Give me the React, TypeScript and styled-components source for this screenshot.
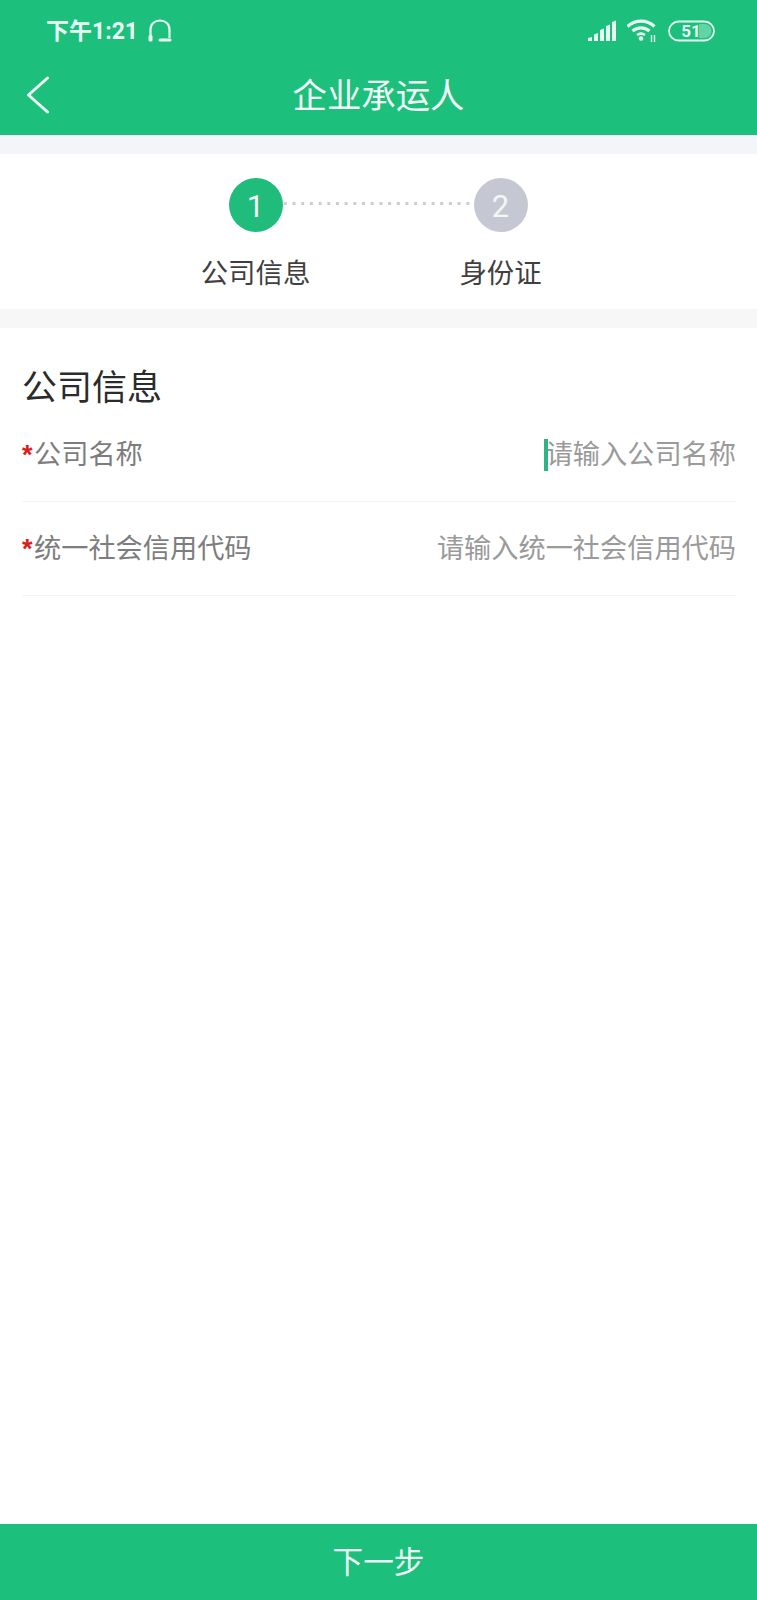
import React from "react";
import styled, {createGlobalStyle} from "styled-components";

const GREEN = "#1dbf7c";
const CJK = `Roboto, "Noto Sans CJK SC", sans-serif`;

const GlobalStyle = createGlobalStyle`
  html, body {
    margin: 0;
    padding: 0;
    background: #fff;
  }
  body {
    font-family: ${CJK};
  }
`;

const Page = styled.div`
  width: 757px;
  height: 1600px;
  display: flex;
  flex-direction: column;
  background: #fff;
  overflow: hidden;
`;

const Header = styled.header`
  background: ${GREEN};
  height: 135px;
  flex: none;
  color: #fff;
`;
const StatusBar = styled.div`
  height: 62px;
  padding: 0 42px 0 46px;
  display: flex;
  align-items: center;
  justify-content: space-between;
`;
const StatusGroup = styled.div`
  display: flex;
  align-items: center;
  gap: ${(p: {$gap: number}) => p.$gap}px;
`;
const Clock = styled.span`
  font-size: 23px;
  font-weight: 700;
  line-height: 1;
  color: #e9fbf2;
`;
const NavBar = styled.div`
  height: 73px;
  display: grid;
  grid-template-columns: 90px 1fr 90px;
  align-items: center;
`;
const BackButton = styled.div`
  padding: 0 0 8px 26px;
  display: flex;
  align-items: center;
`;
const NavTitle = styled.h1`
  margin: 0;
  padding-bottom: 5px;
  font-size: 34.4px;
  font-weight: 400;
  line-height: 1;
  text-align: center;
  color: #f1fcf7;
`;

const Gap = styled.div`
  flex: none;
  height: 19px;
  background: ${(p: {$color: string}) => p.$color};
`;

const Stepper = styled.section`
  flex: none;
  height: 155px;
  padding-top: 24px;
  box-sizing: border-box;
  display: flex;
  justify-content: center;
  padding-right: 1px;
`;
const Step = styled.div`
  width: 54px;
  display: flex;
  flex-direction: column;
  align-items: center;
`;
const StepCircle = styled.div<{$active?: boolean}>`
  width: 54px;
  height: 54px;
  border-radius: 50%;
  flex: none;
  background: ${(p) => (p.$active ? "#1fbc7b" : "#c5c8d2")};
  color: #f4f6f6;
  font-size: 31px;
  line-height: 58px;
  text-align: center;
`;
const StepLabel = styled.div`
  margin-top: 26px;
  font-size: 27.4px;
  line-height: 32px;
  white-space: nowrap;
  color: #3f3f3f;
`;
const StepDots = styled.div`
  width: 191px;
  height: 3px;
  margin-top: 24px;
  background-image: radial-gradient(circle, #c9ccd2 1.4px, transparent 1.5px);
  background-size: 8.7px 3px;
  background-repeat: repeat-x;
  background-position: -2px center;
`;

const Form = styled.main`
  flex: 1;
  padding: 0 21px 0 22px;
  display: flex;
  flex-direction: column;
`;
const SectionTitle = styled.h2`
  margin: 0;
  padding: 41px 0 0;
  font-size: 35px;
  font-weight: 400;
  line-height: 40px;
  color: #2b2b2b;
`;
const Row = styled.div<{$height: number; $lift: number}>`
  height: ${(p) => p.$height}px;
  padding-bottom: ${(p) => p.$lift}px;
  display: flex;
  align-items: center;
  justify-content: space-between;
  border-bottom: 1px solid #f4f4f4;
  box-sizing: border-box;
`;
const FieldLabel = styled.label`
  font-size: 27.2px;
  line-height: 32px;
  color: #7d7d7d;
  display: flex;
  align-items: center;
`;
const Required = styled.span`
  width: 12px;
  font-family: "Liberation Sans", sans-serif;
  font-weight: 700;
  font-size: 27px;
  line-height: 32px;
  color: #d81e1e;
`;
const Placeholder = styled.div`
  position: relative;
  font-size: 27.2px;
  line-height: 32px;
  color: #9a9a9a;
`;
const Caret = styled.span`
  position: absolute;
  left: -2px;
  top: 0;
  width: 4px;
  height: 32px;
  background: #2db582;
`;

const NextButton = styled.button`
  flex: none;
  height: 76px;
  width: 100%;
  padding: 3px 0 0;
  border: none;
  background: ${GREEN};
  color: #eefcf5;
  font-family: ${CJK};
  font-size: 30.6px;
  line-height: 1;
`;

const HeadsetIcon = () => (
    <svg width="26" height="24" viewBox="0 0 26 24" fill="none">
        <path d="M3.5 17V10.5C3.5 5 7.5 1.5 13 1.5S22.5 5 22.5 10.5V19" stroke="#eafbf3" strokeWidth="2.2" />
        <rect x="1.5" y="16" width="4" height="6.5" rx="1.5" fill="#eafbf3" />
        <path d="M13 21H23" stroke="#eafbf3" strokeWidth="3" strokeLinecap="round" />
    </svg>
);

const SignalIcon = () => (
    <svg width="28" height="22" viewBox="0 0 28 22" fill="#e6faf1">
        <path d="M0 21V18L4 17V21Z" />
        <path d="M6 21V14.5L10 13V21Z" />
        <path d="M12 21V10L16 8.5V21Z" />
        <path d="M18 21V6L22 4.5V21Z" />
        <path d="M24 21V2L28 .5V21Z" />
    </svg>
);

const WifiIcon = () => (
    <svg width="30" height="24" viewBox="0 0 30 24" fill="none" stroke="#e6faf1" strokeWidth="3.2">
        <path d="M.5 7.5C8 .2 20 .2 27.5 7.5" />
        <path d="M5.5 12C10.5 7.8 17.5 7.8 22.5 12" />
        <path d="M10 16C12.3 14.4 15.7 14.4 18 16" strokeWidth="2.6" />
        <circle cx="14" cy="19.5" r="2.3" fill="#e6faf1" stroke="none" />
        <path d="M24.5 16V23M27.5 16V23" strokeWidth="1.4" />
    </svg>
);

const BatteryIcon = () => (
    <svg width="47" height="22" viewBox="0 0 47 22" fill="none">
        <rect x="1" y="1.5" width="45" height="19" rx="9.5" stroke="#e6faf1" strokeWidth="1.8" />
        <path d="M31 4H36.5a7 7 0 0 1 0 14H31z" fill="#e6faf1" opacity="0.35" />
        <text x="23" y="17" textAnchor="middle" fontSize="17" fontWeight="700" fontFamily="Roboto, sans-serif" fill="#e6faf1">51</text>
    </svg>
);

const BackIcon = () => (
    <svg width="24" height="38" viewBox="0 0 24 38" fill="none">
        <path d="M21.5 2L2.5 19L21.5 36" stroke="#f1fcf7" strokeWidth="3" strokeLinecap="round" strokeLinejoin="round" />
    </svg>
);

export default function App() {
    return (
        <Page>
            <GlobalStyle />
            <Header>
                <StatusBar>
                    <StatusGroup $gap={9}>
                        <Clock>下午1:21</Clock>
                        <HeadsetIcon />
                    </StatusGroup>
                    <StatusGroup $gap={11}>
                        <SignalIcon />
                        <WifiIcon />
                        <BatteryIcon />
                    </StatusGroup>
                </StatusBar>
                <NavBar>
                    <BackButton><BackIcon /></BackButton>
                    <NavTitle>企业承运人</NavTitle>
                </NavBar>
            </Header>
            <Gap $color="#f2f6fa" />
            <Stepper>
                <Step>
                    <StepCircle $active>1</StepCircle>
                    <StepLabel>公司信息</StepLabel>
                </Step>
                <StepDots />
                <Step>
                    <StepCircle>2</StepCircle>
                    <StepLabel>身份证</StepLabel>
                </Step>
            </Stepper>
            <Gap $color="#f7f7f7" />
            <Form>
                <SectionTitle>公司信息</SectionTitle>
                <Row $height={93} $lift={1}>
                    <FieldLabel><Required>*</Required>公司名称</FieldLabel>
                    <Placeholder><Caret />请输入公司名称</Placeholder>
                </Row>
                <Row $height={94} $lift={0}>
                    <FieldLabel><Required>*</Required>统一社会信用代码</FieldLabel>
                    <Placeholder>请输入统一社会信用代码</Placeholder>
                </Row>
            </Form>
            <NextButton>下一步</NextButton>
        </Page>
    );
}
